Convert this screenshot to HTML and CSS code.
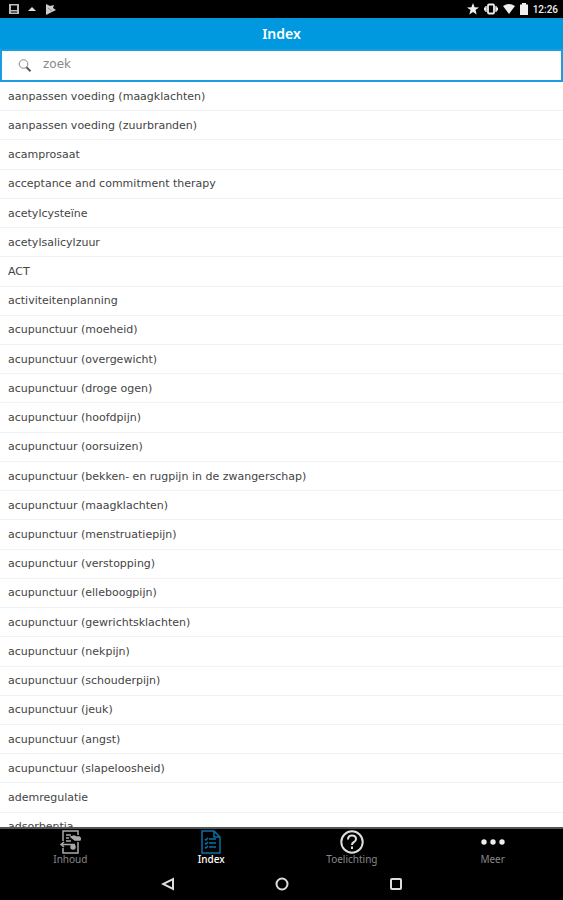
FILE: index.html
```html
<!DOCTYPE html>
<html lang="nl">
<head>
<meta charset="utf-8">
<meta name="viewport" content="width=device-width, initial-scale=1">
<title>Index</title>
<link rel="stylesheet" href="styles.css">
</head>
<body>
<div class="status">
  <svg width="10" height="10" viewBox="0 0 10 10"><path fill="#bbb" fill-rule="evenodd" d="M0 0h10v10H0zM2 1.500v4.500h6V1.500zM2 7.500v1h6v-1z"/></svg>
  <svg class="caret" width="8" height="10" viewBox="0 0 8 10"><path fill="#ddd" d="M4 3l4 4H0z"/></svg>
  <svg width="11" height="11" viewBox="0 0 11 11"><path fill="#ccc" d="M1 0l4 2 4-1-1 3 3 2L1 11z"/><path stroke="#888" d="M3 4l4 3"/></svg>
  <span class="spacer"></span>
  <svg width="12" height="12" viewBox="0 0 12 12"><path fill="#eee" d="M6 0l1.600 4.200 4.400.2-3.500 2.700L9.700 11.500 6 9l-3.700 2.500 1.200-4.400L0 4.400l4.400-.2z"/></svg>
  <svg width="14" height="12" viewBox="0 0 14 12"><rect x="4" y="1.500" width="6" height="9" rx="1" fill="none" stroke="#eee" stroke-width="1.800"/><path stroke="#eee" stroke-width="1.400" d="M2 3v6M.7 4.500v3M12 3v6M13.300 4.500v3"/></svg>
  <svg width="12" height="12" viewBox="0 0 12 12"><path fill="#eee" d="M0 3q6-4 12 0L6 11z"/></svg>
  <svg width="8" height="12" viewBox="0 0 8 12"><path fill="#eee" d="M2 0h4v1.500h2V12H0V1.500h2z"/></svg>
  <time>12:26</time>
</div>
<header><h1>Index</h1></header>
<form class="search">
  <label for="q" aria-label="zoek"><svg width="14" height="14" viewBox="0 0 14 14"><circle cx="5.500" cy="5" r="4.300" fill="none" stroke="#888"/><path d="M8.500 8.300l4 4" stroke="#555" stroke-width="2"/></svg></label>
  <input id="q" type="search" placeholder="zoek">
</form>
<main>
  <ul>
    <li>aanpassen voeding (maagklachten)</li>
    <li>aanpassen voeding (zuurbranden)</li>
    <li>acamprosaat</li>
    <li>acceptance and commitment therapy</li>
    <li>acetylcysteïne</li>
    <li>acetylsalicylzuur</li>
    <li>ACT</li>
    <li>activiteitenplanning</li>
    <li>acupunctuur (moeheid)</li>
    <li>acupunctuur (overgewicht)</li>
    <li>acupunctuur (droge ogen)</li>
    <li>acupunctuur (hoofdpijn)</li>
    <li>acupunctuur (oorsuizen)</li>
    <li>acupunctuur (bekken- en rugpijn in de zwangerschap)</li>
    <li>acupunctuur (maagklachten)</li>
    <li>acupunctuur (menstruatiepijn)</li>
    <li>acupunctuur (verstopping)</li>
    <li>acupunctuur (elleboogpijn)</li>
    <li>acupunctuur (gewrichtsklachten)</li>
    <li>acupunctuur (nekpijn)</li>
    <li>acupunctuur (schouderpijn)</li>
    <li>acupunctuur (jeuk)</li>
    <li>acupunctuur (angst)</li>
    <li>acupunctuur (slapeloosheid)</li>
    <li>ademregulatie</li>
    <li>adsorbentia</li>
  </ul>
</main>
<nav class="tabs">
  <a href="#inhoud">
    <svg width="24" height="24" viewBox="0 0 24 24" fill="none" stroke="#aaa" stroke-width="1.500"><path d="M5 11V1h15v4M20 12v11H5v-5"/><path d="M8 5h5M8 8h3M8 11h5"/><path d="M13 7l3-1 2 1h3q2 1 1 3h-5z" fill="#aaa"/><path d="M3 14.500h14M6 12l-3 2.500L6 17"/><circle cx="15" cy="17" r="2" fill="#aaa"/></svg>
    <span>Inhoud</span></a>
  <a href="#index" class="active" aria-current="page">
    <svg width="24" height="24" viewBox="0 0 24 24" fill="none" stroke="#0b6fa4" stroke-width="1.500"><path d="M3 1h12l6 6v16H3zM15 1v6h6"/><path d="M6 9l1 1 2-2M10 9h7M6 13l1 1 2-2M10 13h7M6 17l1 1 2-2M10 17h7"/></svg>
    <span>Index</span></a>
  <a href="#toelichting">
    <svg width="24" height="24" viewBox="0 0 24 24" fill="none" stroke="#ddd" stroke-width="2"><circle cx="12" cy="12" r="10.700"/><path d="M8 9.500q0-4 4-4t4 3.500q0 2-2 3t-2 3"/><path d="M12 16.500v2.500"/></svg>
    <span>Toelichting</span></a>
  <a href="#meer">
    <svg width="24" height="24" viewBox="0 0 24 24" fill="#eee"><circle cx="3" cy="12" r="2.700"/><circle cx="12" cy="12" r="2.700"/><circle cx="21" cy="12" r="2.700"/></svg>
    <span>Meer</span></a>
</nav>
<div class="system">
  <button aria-label="Terug"><svg width="14" height="14" viewBox="0 0 14 14"><path d="M12 2v10L2 7z"/></svg></button>
  <button aria-label="Start"><svg width="14" height="14" viewBox="0 0 14 14"><circle cx="7" cy="7" r="5.500"/></svg></button>
  <button aria-label="Overzicht"><svg width="14" height="14" viewBox="0 0 14 14"><rect x="2" y="2" width="10" height="10" rx="1"/></svg></button>
</div>
</body>
</html>
```
FILE: styles.css
```css
* { box-sizing: border-box; }

body {
  display: flex;
  flex-direction: column;
  height: 100vh;
  margin: 0;
  background: #fff;
  color: #444;
  font: 11px "DejaVu Sans", sans-serif;
}

.status {
  display: flex;
  align-items: center;
  gap: 5px;
  height: 18px;
  padding: 0 5px 0 9px;
  background: #000;
  color: #eee;
  font: 500 10px Roboto, sans-serif;
}

.caret { margin: 0 4px; }
.spacer { flex: 1; }

header {
  height: 31px;
  background: #0099df;
  color: #fff;
}

h1 {
  margin: 0;
  font: 600 14px/32px "Noto Sans", sans-serif;
  text-align: center;
}

.search {
  display: flex;
  align-items: center;
  gap: 11px;
  height: 33px;
  padding: 0 16px;
  border: 2px solid #1a9ee0;
}

.search label { display: flex; }

.search input {
  flex: 1;
  min-width: 0;
  padding: 0 0 4px;
  border: 0;
  outline: 0;
  background: none;
  color: #555;
  font: 12px "DejaVu Sans", sans-serif;
}

.search input::placeholder { color: #888; }

main {
  flex: 1;
  min-height: 0;
  overflow: hidden;
}

ul {
  display: grid;
  grid-auto-rows: minmax(28px, 1fr);
  height: 102%;
  margin: 0;
  padding: 0;
  list-style: none;
}

li {
  display: flex;
  align-items: center;
  padding: 0 8px;
  border-bottom: 1px solid #f2f2f2;
}

.tabs {
  display: grid;
  grid-template-columns: repeat(4, 1fr);
  height: 41px;
  border-top: 2px solid #555;
  background: #000;
}

.tabs a {
  display: flex;
  flex-direction: column;
  align-items: center;
  padding-top: 1px;
  color: #888;
  font: 10px/10px "Noto Sans", sans-serif;
  text-decoration: none;
}

.tabs svg { flex: none; }

.tabs .active {
  color: #fff;
  font-weight: 500;
}

.system {
  display: flex;
  justify-content: center;
  gap: 100px;
  height: 32px;
  background: #000;
}

.system button {
  display: flex;
  align-items: center;
  justify-content: center;
  width: 14px;
  padding: 0;
  border: 0;
  background: none;
}

.system svg {
  flex: none;
  fill: none;
  stroke: #ddd;
  stroke-width: 2;
}
```
